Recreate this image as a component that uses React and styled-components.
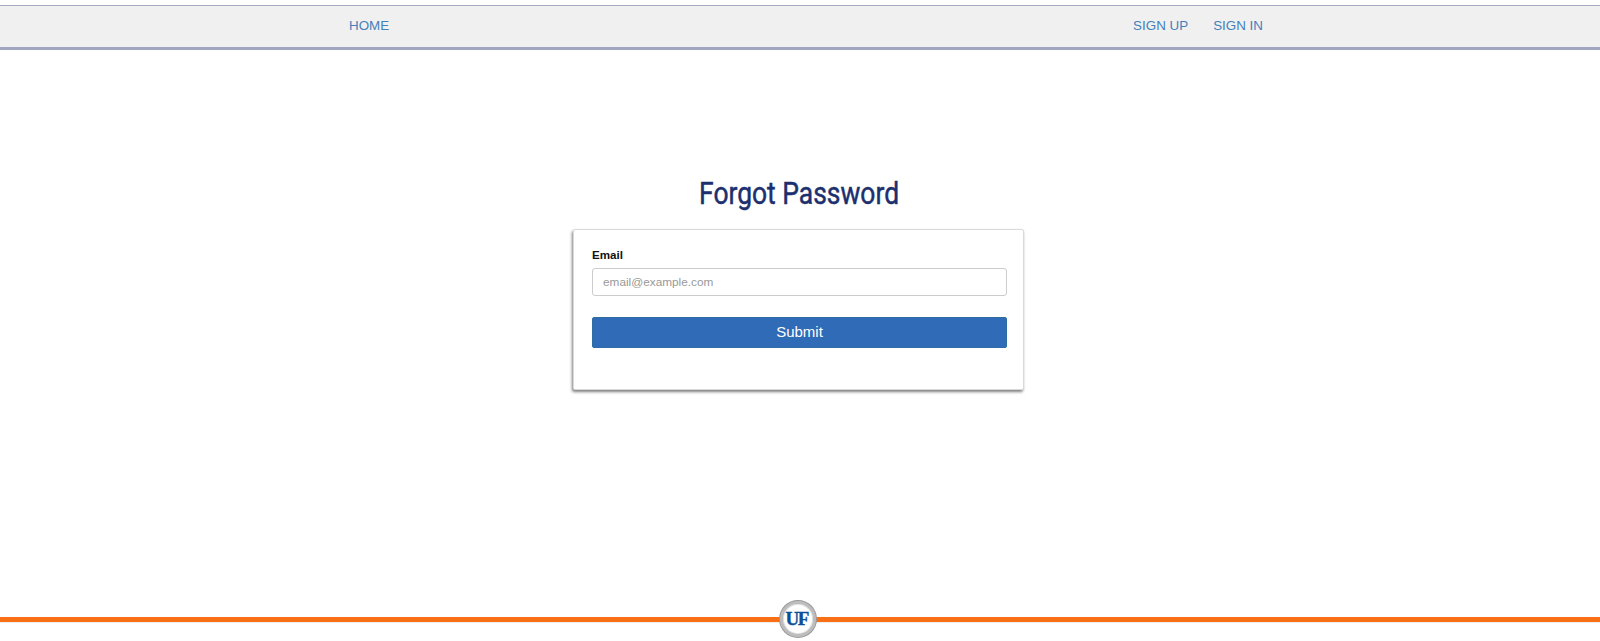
import React from "react";
import styled, { createGlobalStyle } from "styled-components";

const Global = createGlobalStyle`
  html, body { margin: 0; padding: 0; background: #fff; }
  body { font-family: "Liberation Sans", Arial, sans-serif; }
`;

const Page = styled.div`
  height: 641px;
  overflow: hidden;
  display: flex;
  flex-direction: column;
  padding-top: 5px;
  box-sizing: border-box;
`;

const NavBar = styled.nav`
  height: 45px;
  box-sizing: border-box;
  background: #f0f0f0;
  border-top: 1px solid #a3a9c0;
  border-bottom: 3px solid #a0a6bf;
  padding: 0 337px 2px 349px;
  display: flex;
  align-items: center;
  justify-content: space-between;
`;

const NavGroup = styled.div`
  display: flex;
  gap: 25px;
`;

const NavLink = styled.a`
  font-size: 13.4px;
  line-height: 20px;
  color: #4580bb;
  text-decoration: none;
  text-transform: uppercase;
`;

const Main = styled.main`
  flex: 1;
  display: flex;
  flex-direction: column;
  align-items: center;
  padding: 124px 3px 0 0;
`;

const Title = styled.h1`
  margin: 0 0 17px 2px;
  height: 38px;
  font-family: Roboto, sans-serif;
  font-weight: 400;
  font-size: 32px;
  line-height: 38px;
  color: #1c2f6e;
  -webkit-text-stroke: 0.5px #1c2f6e;
  white-space: nowrap;
  transform: scaleX(0.826);
`;

const Card = styled.form`
  width: 451px;
  height: 161px;
  box-sizing: border-box;
  padding: 18px 16px 0 18px;
  background: #fff;
  border: 1px solid #d9d9d9;
  border-radius: 2px;
  box-shadow: -1px 2px 3px rgba(0, 0, 0, 0.5);
  display: flex;
  flex-direction: column;
`;

const Label = styled.label`
  font-size: 11.6px;
  line-height: 14px;
  font-weight: 700;
  color: #111;
  margin-bottom: 6px;
`;

const Input = styled.input`
  height: 28px;
  box-sizing: border-box;
  padding: 0 10px;
  font-family: inherit;
  font-size: 11.8px;
  border: 1px solid #ccc;
  border-radius: 3px;
  margin-bottom: 21px;
  outline: none;
  &::placeholder { color: #999; opacity: 1; }
`;

const Submit = styled.button`
  height: 31px;
  border: 1px solid #2e6da4;
  border-radius: 2px;
  background: #2f6bb7;
  color: #fff;
  font-family: inherit;
  font-size: 15px;
  padding: 0 0 2px;
`;

const Footer = styled.footer`
  position: relative;
  height: 40px;
  margin-bottom: 2px;
  padding-right: 5px;
  display: flex;
  justify-content: center;
  &::before {
    content: "";
    position: absolute;
    left: 0;
    right: 0;
    top: 18px;
    height: 5px;
    background: #f96f16;
    border-bottom: 1px solid #eee;
  }
`;

const Badge = styled.div`
  position: relative;
  margin-top: 2px;
  width: 36px;
  height: 36px;
  box-sizing: border-box;
  border-radius: 50%;
  background: #fff;
  border: 3px solid #bdbdbd;
  box-shadow: 0 0 0 1px #999, inset 0 0 0 1px #e2e2e2;
  display: flex;
  align-items: center;
  justify-content: center;
`;

const BadgeText = styled.span`
  font-family: "Liberation Serif", serif;
  font-weight: 700;
  font-size: 19px;
  letter-spacing: -1.5px;
  padding-right: 1.5px;
  color: #0b4f98;
  -webkit-text-stroke: 0.4px #0b4f98;
`;

export default function App() {
  return (
    <>
      <Global />
      <Page>
        <NavBar>
          <NavGroup>
            <NavLink href="#">Home</NavLink>
          </NavGroup>
          <NavGroup>
            <NavLink href="#">Sign up</NavLink>
            <NavLink href="#">Sign in</NavLink>
          </NavGroup>
        </NavBar>
        <Main>
          <Title>Forgot Password</Title>
          <Card onSubmit={(e) => e.preventDefault()}>
            <Label htmlFor="email">Email</Label>
            <Input id="email" type="email" placeholder="email@example.com" />
            <Submit type="submit">Submit</Submit>
          </Card>
        </Main>
        <Footer>
          <Badge>
            <BadgeText>UF</BadgeText>
          </Badge>
        </Footer>
      </Page>
    </>
  );
}
